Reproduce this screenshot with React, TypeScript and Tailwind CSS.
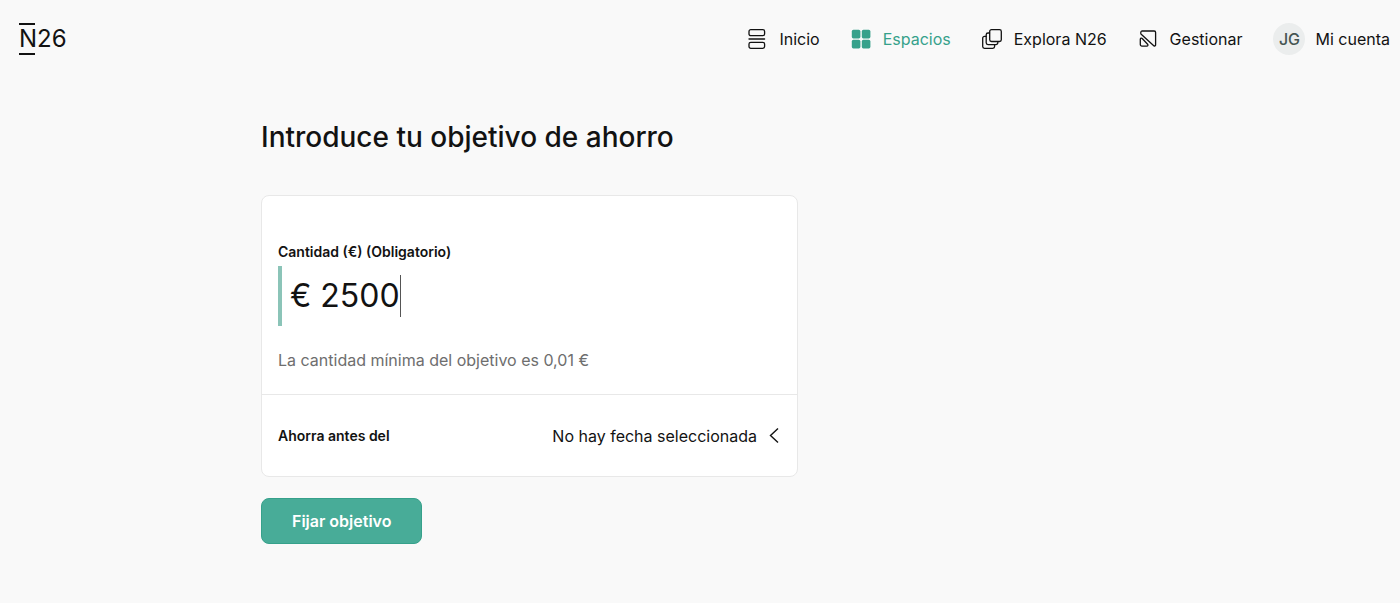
import React, { useState } from "react";

interface NavItemProps {
  label: string;
  active?: boolean;
  children: React.ReactNode;
}

function NavItem({ label, active = false, children }: NavItemProps) {
  return (
    <a
      href="#"
      aria-current={active ? "page" : undefined}
      className={`flex items-center gap-3 text-base leading-6 ${active ? "text-[#36a18b]" : "text-[#121212]"}`}
    >
      {children}
      {label}
    </a>
  );
}

const iconProps = {
  className: "h-5 w-5 shrink-0",
  viewBox: "0 0 20 20",
  fill: "none",
  stroke: "currentColor",
  strokeWidth: 1.3,
  strokeLinejoin: "round" as const,
  strokeLinecap: "round" as const,
  "aria-hidden": true,
};

function Logo() {
  return (
    <a href="#" aria-label="N26" className="relative block text-2xl leading-8 text-[#121212]">
      N26
      {/* Bars above and below the N */}
      <span className="absolute top-0 left-0 h-0.5 w-4 bg-[#121212]" />
      <span className="absolute bottom-0 left-0 h-0.5 w-4 bg-[#121212]" />
    </a>
  );
}

function Header() {
  return (
    <header className="flex h-[78px] items-center justify-between pr-2.5 pl-[19px]">
      <Logo />
      <nav className="flex items-center gap-[31px]">
        <NavItem label="Inicio">
          <svg {...iconProps}>
            <rect x="2" y="0.7" width="15.6" height="6" rx="1.8" />
            <path d="M2 10h15.6" />
            <rect x="2" y="13.3" width="15.6" height="6" rx="1.8" />
          </svg>
        </NavItem>
        <NavItem label="Espacios" active>
          <svg {...iconProps} fill="currentColor" stroke="none">
            <rect x="0.8" y="0.8" width="8.6" height="8.6" rx="1.6" />
            <rect x="10.8" y="0.8" width="8.6" height="8.6" rx="1.6" />
            <rect x="0.8" y="10.8" width="8.6" height="8.6" rx="1.6" />
            <rect x="10.8" y="10.8" width="8.6" height="8.6" rx="1.6" />
          </svg>
        </NavItem>
        <NavItem label="Explora N26">
          <svg {...iconProps}>
            <rect x="7.7" y="0.7" width="11.6" height="11.8" rx="1.8" />
            <path d="M7.5 4H6a1.8 1.8 0 0 0-1.8 1.8v8A1.8 1.8 0 0 0 6 15.6h8a1.8 1.8 0 0 0 1.8-1.8v-1" />
            <path d="M4 7.4H2.5A1.8 1.8 0 0 0 .7 9.2v8.3a1.8 1.8 0 0 0 1.8 1.8h8.3a1.8 1.8 0 0 0 1.8-1.8v-1.6" />
          </svg>
        </NavItem>
        <NavItem label="Gestionar">
          <svg {...iconProps}>
            <path d="M2.8 4V3.4a1.4 1.4 0 0 1 1.4-1.4h12a1.4 1.4 0 0 1 1.4 1.4v12.3a1.2 1.2 0 0 1-2.1.9L3.2 5.3A1.6 1.6 0 0 1 2.8 4Z" />
            <path d="M2.3 10.3c0-1.1 1.1-1.6 1.9-.8l5.4 5.7c.7.8.3 1.9-.8 1.9H3.9a1.6 1.6 0 0 1-1.6-1.6Z" />
          </svg>
        </NavItem>
        <NavItem label="Mi cuenta">
          <span className="-mr-0.5 flex h-8 w-8 items-center justify-center rounded-full bg-[#ebeded] font-medium text-[#465552]">
            JG
          </span>
        </NavItem>
      </nav>
    </header>
  );
}

export default function App() {
  const [amount, setAmount] = useState("€ 2500");

  return (
    <div className="min-h-screen bg-[#f9f9f9] font-['Inter','Liberation_Sans',sans-serif] text-[#121212]">
      <Header />
      <main className="mx-auto max-w-[878px] pt-[41px]">
        <h1 className="text-[28px] leading-9 font-medium">Introduce tu objetivo de ahorro</h1>

        <form className="mt-10 max-w-[537px]" onSubmit={(e) => e.preventDefault()}>
          <div className="rounded-lg border border-[#e8e8e8] bg-white">
            <div className="border-b border-[#e8e8e8] px-4 pt-[46px] pb-[22px]">
              <label htmlFor="amount" className="block text-sm leading-5 font-semibold">
                Cantidad (€) (Obligatorio)
              </label>
              <div className="mt-1 flex h-[60px] items-center border-l-4 border-[#8bc4b8] pl-2">
                <input
                  id="amount"
                  type="text"
                  inputMode="decimal"
                  value={amount}
                  onChange={(e) => setAmount(e.target.value)}
                  className="field-sizing-content text-[32px] leading-10 caret-transparent outline-none"
                />
                <span className="h-[42px] w-px bg-[#555555]" />
              </div>
              <p className="mt-[22px] text-base leading-6 text-[#6e6e6e]">
                La cantidad mínima del objetivo es 0,01 €
              </p>
            </div>
            <div className="flex h-[81px] items-center justify-between px-4">
              <span id="date-label" className="text-sm leading-5 font-semibold">
                Ahorra antes del
              </span>
              <button
                type="button"
                aria-describedby="date-label"
                className="flex items-center gap-3 text-base leading-6"
              >
                No hay fecha seleccionada
                <svg
                  className="h-4 w-3"
                  viewBox="0 0 12 16"
                  fill="none"
                  stroke="currentColor"
                  strokeWidth="1.4"
                  aria-hidden="true"
                >
                  <path d="M9 0.5 1.5 7.5 9 14.5" />
                </svg>
              </button>
            </div>
          </div>

          <button
            type="submit"
            className="mt-[21px] h-[46px] rounded-lg border border-[#36a18b] bg-[#48ac98] px-[30px] text-base leading-6 font-semibold text-white"
          >
            Fijar objetivo
          </button>
        </form>
      </main>
    </div>
  );
}
